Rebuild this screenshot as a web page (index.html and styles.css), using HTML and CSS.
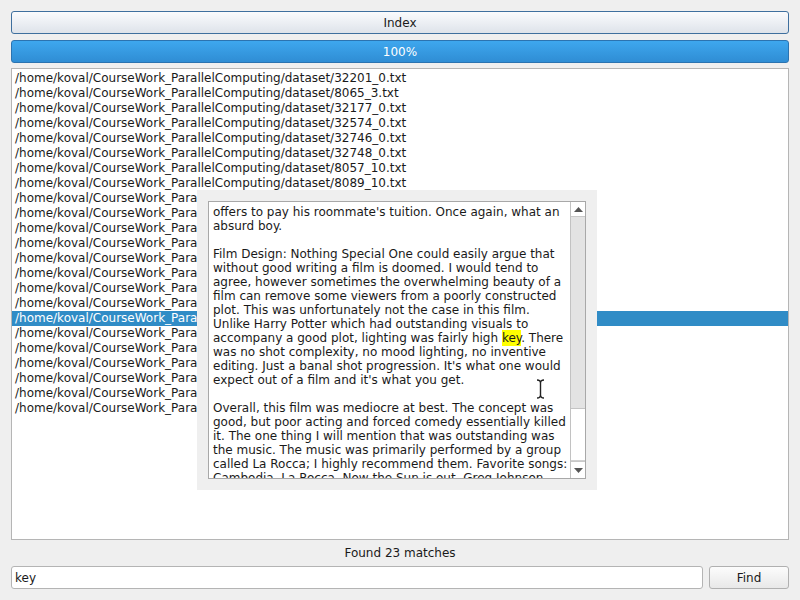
FILE: index.html
```html
<!DOCTYPE html>
<html>
<head>
<meta charset="utf-8">
<link rel="stylesheet" href="styles.css">
</head>
<body>
<div class="window">
  <button class="btn index-btn">Index</button>
  <div class="progress"><span>100%</span></div>
  <div class="list">
    <div class="row">/home/koval/CourseWork_ParallelComputing/dataset/32201_0.txt</div>
    <div class="row">/home/koval/CourseWork_ParallelComputing/dataset/8065_3.txt</div>
    <div class="row">/home/koval/CourseWork_ParallelComputing/dataset/32177_0.txt</div>
    <div class="row">/home/koval/CourseWork_ParallelComputing/dataset/32574_0.txt</div>
    <div class="row">/home/koval/CourseWork_ParallelComputing/dataset/32746_0.txt</div>
    <div class="row">/home/koval/CourseWork_ParallelComputing/dataset/32748_0.txt</div>
    <div class="row">/home/koval/CourseWork_ParallelComputing/dataset/8057_10.txt</div>
    <div class="row">/home/koval/CourseWork_ParallelComputing/dataset/8089_10.txt</div>
    <div class="row">/home/koval/CourseWork_ParallelComputing/dataset/8101_10.txt</div>
    <div class="row">/home/koval/CourseWork_ParallelComputing/dataset/8112_10.txt</div>
    <div class="row">/home/koval/CourseWork_ParallelComputing/dataset/8125_10.txt</div>
    <div class="row">/home/koval/CourseWork_ParallelComputing/dataset/8131_10.txt</div>
    <div class="row">/home/koval/CourseWork_ParallelComputing/dataset/8149_10.txt</div>
    <div class="row">/home/koval/CourseWork_ParallelComputing/dataset/8153_10.txt</div>
    <div class="row">/home/koval/CourseWork_ParallelComputing/dataset/8166_10.txt</div>
    <div class="row">/home/koval/CourseWork_ParallelComputing/dataset/8170_10.txt</div>
    <div class="row selected">/home/koval/CourseWork_ParallelComputing/dataset/8182_10.txt</div>
    <div class="row">/home/koval/CourseWork_ParallelComputing/dataset/8195_10.txt</div>
    <div class="row">/home/koval/CourseWork_ParallelComputing/dataset/8203_10.txt</div>
    <div class="row">/home/koval/CourseWork_ParallelComputing/dataset/8214_10.txt</div>
    <div class="row">/home/koval/CourseWork_ParallelComputing/dataset/8227_10.txt</div>
    <div class="row">/home/koval/CourseWork_ParallelComputing/dataset/8238_10.txt</div>
    <div class="row">/home/koval/CourseWork_ParallelComputing/dataset/8241_10.txt</div>
  </div>
  <div class="status">Found 23 matches</div>
  <div class="search-row">
    <div class="input">key</div>
    <button class="btn find-btn">Find</button>
  </div>

  <div class="popup">
    <div class="textbox">
      <div class="text">offers to pay his roommate's tuition. Once again, what an<br>absurd boy.<br><br>Film Design: Nothing Special One could easily argue that<br>without good writing a film is doomed. I would tend to<br>agree, however sometimes the overwhelming beauty of a<br>film can remove some viewers from a poorly constructed<br>plot. This was unfortunately not the case in this film.<br>Unlike Harry Potter which had outstanding visuals to<br>accompany a good plot, lighting was fairly high <span class="hl">key</span>. There<br>was no shot complexity, no mood lighting, no inventive<br>editing. Just a banal shot progression. It's what one would<br>expect out of a film and it's what you get.<br><br>Overall, this film was mediocre at best. The concept was<br>good, but poor acting and forced comedy essentially killed<br>it. The one thing I will mention that was outstanding was<br>the music. The music was primarily performed by a group<br>called La Rocca; I highly recommend them. Favorite songs:<br>Cambodia, La Rocca, Now the Sun is out, Greg Johnson</div>
      <div class="scrollbar">
        <div class="sb-btn"><svg width="9" height="5" viewBox="0 0 9 5"><path d="M0 5 L4.5 0 L9 5 Z" fill="#555"/></svg></div>
        <div class="sb-handle"></div>
        <div class="sb-track"></div>
        <div class="sb-btn sb-down"><svg width="9" height="5" viewBox="0 0 9 5"><path d="M0 0 L4.5 5 L9 0 Z" fill="#555"/></svg></div>
      </div>
    </div>
    <svg class="ibeam" width="9" height="20" viewBox="0 0 9 20"><path d="M1 1 Q4.5 1 4.5 4 L4.5 16 Q4.5 19 1 19 M8 1 Q4.5 1 4.5 4 M4.5 16 Q4.5 19 8 19" stroke="#222" stroke-width="1.4" fill="none"/></svg>
  </div>
</div>
</body>
</html>
```

FILE: styles.css
```css
html, body {
  margin: 0;
  padding: 0;
  width: 800px;
  height: 600px;
  overflow: hidden;
  background: #efefef;
  font-family: "DejaVu Sans", sans-serif;
  font-size: 12px;
  color: #1a1a1a;
}

.window {
  position: relative;
  box-sizing: border-box;
  width: 800px;
  height: 600px;
  padding: 11px 11px 11px 11px;
  display: flex;
  flex-direction: column;
}

.btn {
  font-family: "DejaVu Sans", sans-serif;
  font-size: 12px;
  color: #1a1a1a;
  box-sizing: border-box;
  border-radius: 3px;
  background: linear-gradient(#fcfcfc, #e8e8e8);
  border: 1px solid #b0b0b0;
  padding: 0;
  margin: 0;
}

.index-btn {
  height: 23px;
  width: 100%;
  padding-top: 1px;
  border-color: #3e6f9e;
  background: linear-gradient(#fafbfd, #dee3ea);
}

.progress {
  margin-top: 6px;
  height: 23px;
  box-sizing: border-box;
  border: 1px solid #2b73b0;
  border-radius: 3px;
  background: linear-gradient(#3ea7ee, #2f8dd4);
  color: #ffffff;
  display: flex;
  align-items: center;
  justify-content: center;
  padding-top: 1px;
}

.list {
  margin-top: 5px;
  flex: 1;
  background: #ffffff;
  border: 1px solid #b5b5b5;
  padding-top: 2px;
  overflow: hidden;
}

.row {
  height: 15px;
  line-height: 15px;
  padding-left: 3px;
  white-space: nowrap;
}

.row.selected {
  background: #308cc6;
  color: #ffffff;
}

.status {
  height: 26px;
  line-height: 27px;
  text-align: center;
}

.search-row {
  display: flex;
  gap: 6px;
  height: 23px;
}

.input {
  flex: 1;
  box-sizing: border-box;
  background: #ffffff;
  border: 1px solid #b4b4b4;
  border-radius: 3px;
  padding-left: 3px;
  line-height: 22px;
}

.find-btn {
  width: 80px;
  height: 23px;
  padding-top: 1px;
}

.popup {
  position: absolute;
  left: 197px;
  top: 190px;
  width: 400px;
  height: 300px;
  box-sizing: border-box;
  background: #efefef;
  padding: 11px 11px 11px 11px;
}

.textbox {
  box-sizing: border-box;
  width: 378px;
  height: 278px;
  border: 1px solid #a8a8a8;
  background: #ffffff;
  display: flex;
  overflow: hidden;
}

.text {
  flex: 1;
  padding: 3px 0 0 4px;
  line-height: 14px;
  white-space: nowrap;
  overflow: hidden;
  color: #1a1a1a;
}

.hl {
  background: #ffff00;
  padding: 1px 0;
}

.scrollbar {
  width: 15px;
  box-sizing: border-box;
  border-left: 1px solid #c2c2c2;
  display: flex;
  flex-direction: column;
  background: #ffffff;
}

.sb-btn {
  height: 14px;
  display: flex;
  align-items: center;
  justify-content: center;
  border-bottom: 1px solid #c8c8c8;
}

.sb-down {
  border-bottom: none;
  border-top: 1px solid #c8c8c8;
  height: 16px;
}

.sb-handle {
  height: 191px;
  background: #e3e3e3;
  border-bottom: 1px solid #c4c4c4;
}

.sb-track {
  flex: 1;
  background: #ffffff;
  border-bottom: 1px solid #d0d0d0;
}

.ibeam {
  position: absolute;
  left: 339px;
  top: 189px;
}
```
